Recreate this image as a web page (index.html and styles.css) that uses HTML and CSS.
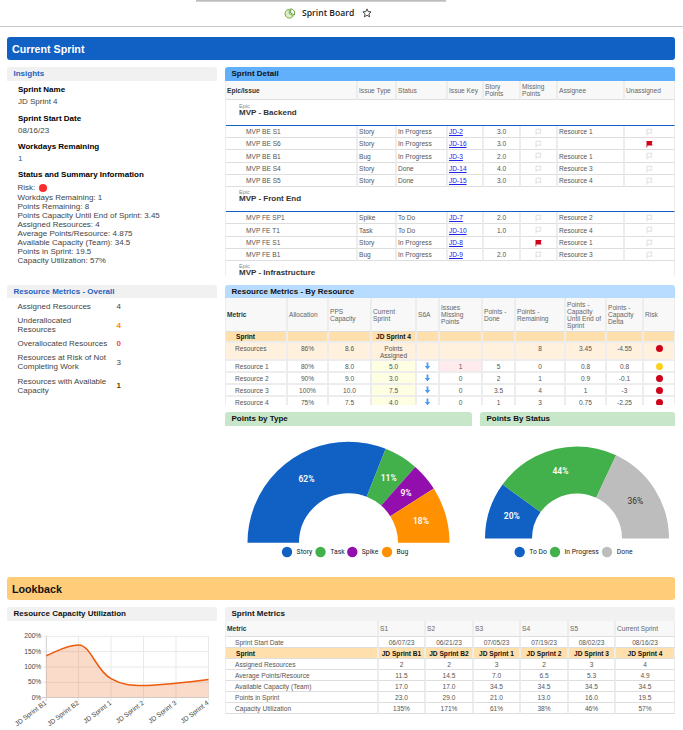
FILE: index.html
```html
<!DOCTYPE html>
<html lang="en">

<head>
    <meta charset="UTF-8">
    <meta name="viewport" content="width=device-width, initial-scale=1.0">
    <title>Sprint Board</title>
    <link rel="stylesheet" href="styles.css">
</head>

<body>
    <svg class="defs" width="0" height="0">
        <symbol id="flag" viewBox="0 0 7 8">
            <path d="M1 7.5V1.2h5L5 3.2l1 2H1" fill="none" stroke="#dcdcdc" stroke-width="0.9" />
        </symbol>
        <symbol id="flag-red" viewBox="0 0 7 8">
            <path d="M0.5 7.5V1h6L5.8 3.2l.7 2.3H1.3v2z" fill="#d0021b" />
        </symbol>
        <symbol id="down" viewBox="0 0 7 8">
            <path d="M2.6 0.5h1.8v3.4h1.8L3.5 7.5 0.8 3.9h1.8z" fill="#4a9cf0" />
        </symbol>
    </svg>

    <header class="topbar">
        <div class="tab-shadow"></div>
        <div class="title">
            <svg width="12" height="11" viewBox="0 0 12 11">
                <path d="M5.3 1.3A4.4 4.4 0 1 0 9.3 7.8L5.3 5.5z" fill="#dcedc8" stroke="#689f38" stroke-width="0.9" />
                <path d="M6.7 0.8v4.2l3.6 2A4.3 4.3 0 0 0 6.7 0.8z" fill="#fff" stroke="#558b2f" stroke-width="0.9" />
            </svg>
            <span>Sprint Board</span>
            <svg width="10" height="10" viewBox="0 0 10 10">
                <path d="M5 .9l1.2 2.7 2.9.3-2.2 2 .7 2.9L5 7.3 2.4 8.8l.7-2.9-2.2-2 2.9-.3z" fill="none" stroke="#333" stroke-width="0.9" />
            </svg>
        </div>
    </header>

    <main>
        <h1 class="bar blue">Current Sprint</h1>

        <div class="row detail-row">
            <section class="panel side">
                <h2 class="gray link">Insights</h2>
                <dl class="insights">
                    <dt>Sprint Name</dt>
                    <dd>JD Sprint 4</dd>
                    <dt>Sprint Start Date</dt>
                    <dd>08/16/23</dd>
                    <dt>Workdays Remaining</dt>
                    <dd class="count">1</dd>
                    <dt>Status and Summary Information</dt>
                </dl>
                <ul class="summary">
                    <li>Risk: <i class="dot bright"></i></li>
                    <li>Workdays Remaining: 1</li>
                    <li>Points Remaining: 8</li>
                    <li>Points Capacity Until End of Sprint: 3.45</li>
                    <li>Assigned Resources: 4</li>
                    <li>Average Points/Resource: 4.875</li>
                    <li>Available Capacity (Team): 34.5</li>
                    <li>Points in Sprint: 19.5</li>
                    <li>Capacity Utilization: 57%</li>
                </ul>
            </section>

            <section class="panel wide">
                <h2 class="sky">Sprint Detail</h2>
                <table class="detail">
                    <colgroup><col class="w132"><col class="w39"><col class="w51"><col class="w36"><col class="w37"><col class="w37"><col class="w67"><col class="w50"></colgroup>
                    <thead>
                        <tr><th>Epic/Issue</th><th>Issue Type</th><th>Status</th><th>Issue Key</th><th>Story<br>Points</th><th>Missing<br>Points</th><th>Assignee</th><th>Unassigned</th></tr>
                    </thead>
                    <tbody>
                        <tr class="epic"><td colspan="8"><small>Epic</small><b>MVP - Backend</b></td></tr>
                        <tr><td>MVP BE S1</td><td>Story</td><td>In Progress</td><td><a href="#">JD-2</a></td><td>3.0</td><td><svg><use href="#flag" /></svg></td><td>Resource 1</td><td><svg><use href="#flag" /></svg></td></tr>
                        <tr><td>MVP BE S6</td><td>Story</td><td>In Progress</td><td><a href="#">JD-16</a></td><td>3.0</td><td><svg><use href="#flag" /></svg></td><td></td><td><svg><use href="#flag-red" /></svg></td></tr>
                        <tr class="tall"><td>MVP BE B1</td><td>Bug</td><td>In Progress</td><td><a href="#">JD-3</a></td><td>2.0</td><td><svg><use href="#flag" /></svg></td><td>Resource 1</td><td><svg><use href="#flag" /></svg></td></tr>
                        <tr><td>MVP BE S4</td><td>Story</td><td>Done</td><td><a href="#">JD-14</a></td><td>4.0</td><td><svg><use href="#flag" /></svg></td><td>Resource 3</td><td><svg><use href="#flag" /></svg></td></tr>
                        <tr><td>MVP BE S5</td><td>Story</td><td>Done</td><td><a href="#">JD-15</a></td><td>3.0</td><td><svg><use href="#flag" /></svg></td><td>Resource 4</td><td><svg><use href="#flag" /></svg></td></tr>
                        <tr class="epic second"><td colspan="8"><small>Epic</small><b>MVP - Front End</b></td></tr>
                        <tr><td>MVP FE SP1</td><td>Spike</td><td>To Do</td><td><a href="#">JD-7</a></td><td>2.0</td><td><svg><use href="#flag" /></svg></td><td>Resource 2</td><td><svg><use href="#flag" /></svg></td></tr>
                        <tr class="tall"><td>MVP FE T1</td><td>Task</td><td>To Do</td><td><a href="#">JD-10</a></td><td>1.0</td><td><svg><use href="#flag" /></svg></td><td>Resource 4</td><td><svg><use href="#flag" /></svg></td></tr>
                        <tr><td>MVP FE S1</td><td>Story</td><td>In Progress</td><td><a href="#">JD-8</a></td><td></td><td><svg><use href="#flag-red" /></svg></td><td>Resource 1</td><td><svg><use href="#flag" /></svg></td></tr>
                        <tr><td>MVP FE B1</td><td>Bug</td><td>In Progress</td><td><a href="#">JD-9</a></td><td>2.0</td><td><svg><use href="#flag" /></svg></td><td>Resource 3</td><td><svg><use href="#flag" /></svg></td></tr>
                        <tr class="epic last"><td colspan="8"><small>Epic</small><b>MVP - Infrastructure</b></td></tr>
                    </tbody>
                </table>
            </section>
        </div>

        <div class="row metrics-row">
            <section class="panel side">
                <h2 class="gray link">Resource Metrics - Overall</h2>
                <dl class="overall">
                    <dt>Assigned Resources</dt>
                    <dd>4</dd>
                    <dt>Underallocated Resources</dt>
                    <dd class="orange">4</dd>
                    <dt>Overallocated Resources</dt>
                    <dd class="red">0</dd>
                    <dt>Resources at Risk of Not Completing Work</dt>
                    <dd>3</dd>
                    <dt>Resources with Available Capacity</dt>
                    <dd class="olive">1</dd>
                </dl>
            </section>

            <div class="stack">
                <section class="panel by-resource">
                    <h2 class="pale">Resource Metrics - By Resource</h2>
                    <table class="resources">
                        <colgroup><col class="w62"><col class="w41"><col class="w43"><col class="w45"><col class="w23"><col class="w43"><col class="w33"><col class="w50"><col class="w41"><col class="w37"><col class="w31"></colgroup>
                        <thead>
                            <tr><th>Metric</th><th>Allocation</th><th>PPS<br>Capacity</th><th>Current<br>Sprint</th><th>S6A</th><th>Issues<br>Missing<br>Points</th><th>Points -<br>Done</th><th>Points -<br>Remaining</th><th>Points -<br>Capacity<br>Until End of<br>Sprint</th><th>Points -<br>Capacity<br>Delta</th><th>Risk</th></tr>
                        </thead>
                        <tbody>
                            <tr class="sprint"><td>Sprint</td><td></td><td></td><td>JD Sprint 4</td><td></td><td></td><td></td><td></td><td></td><td></td><td></td></tr>
                            <tr class="total"><td>Resources</td><td>86%</td><td>8.6</td><td>Points<br>Assigned</td><td></td><td></td><td></td><td>8</td><td>3.45</td><td>-4.55</td><td><i class="dot"></i></td></tr>
                            <tr><td>Resource 1</td><td>80%</td><td>8.0</td><td class="lemon">5.0</td><td><svg><use href="#down" /></svg></td><td class="pink">1</td><td>5</td><td>0</td><td>0.8</td><td>0.8</td><td><i class="dot yellow"></i></td></tr>
                            <tr><td>Resource 2</td><td>90%</td><td>9.0</td><td class="lemon">3.0</td><td><svg><use href="#down" /></svg></td><td>0</td><td>2</td><td>1</td><td>0.9</td><td>-0.1</td><td><i class="dot"></i></td></tr>
                            <tr><td>Resource 3</td><td>100%</td><td>10.0</td><td class="lemon">7.5</td><td><svg><use href="#down" /></svg></td><td>0</td><td>3.5</td><td>4</td><td>1</td><td>-3</td><td><i class="dot"></i></td></tr>
                            <tr><td>Resource 4</td><td>75%</td><td>7.5</td><td class="lemon">4.0</td><td><svg><use href="#down" /></svg></td><td>0</td><td>1</td><td>3</td><td>0.75</td><td>-2.25</td><td><i class="dot"></i></td></tr>
                        </tbody>
                    </table>
                </section>

                <div class="charts">
                    <section class="panel by-type">
                        <h2 class="green">Points by Type</h2>
                        <svg class="donut" width="247" height="136" viewBox="225 426 247 136">
                            <g fill="none" stroke-width="51.5">
                                <path pathLength="100" d="M273.25 542.7a75.25 75.25 0 0 1 150.5 0" stroke="#1161c5" stroke-dasharray="62 200" />
                                <path pathLength="100" d="M273.25 542.7a75.25 75.25 0 0 1 150.5 0" stroke="#43b14b" stroke-dasharray="11 200" stroke-dashoffset="-62" />
                                <path pathLength="100" d="M273.25 542.7a75.25 75.25 0 0 1 150.5 0" stroke="#920fae" stroke-dasharray="9 200" stroke-dashoffset="-73" />
                                <path pathLength="100" d="M273.25 542.7a75.25 75.25 0 0 1 150.5 0" stroke="#ff9100" stroke-dasharray="18 200" stroke-dashoffset="-82" />
                            </g>
                            <g class="slice">
                                <text x="306.5" y="481.6">62%</text>
                                <text x="388.7" y="480.6">11%</text>
                                <text x="406" y="496.3">9%</text>
                                <text x="421" y="524.2">18%</text>
                            </g>
                            <circle cx="287" cy="552" r="5.2" fill="#1161c5" />
                            <circle cx="320.5" cy="552" r="5.2" fill="#43b14b" />
                            <circle cx="352.3" cy="552" r="5.2" fill="#920fae" />
                            <circle cx="387" cy="552" r="5.2" fill="#ff9100" />
                            <g class="legend">
                                <text x="296.6" y="554.2">Story</text>
                                <text x="330.3" y="554.2">Task</text>
                                <text x="361.8" y="554.2">Spike</text>
                                <text x="396.5" y="554.2">Bug</text>
                            </g>
                        </svg>
                    </section>
                    <section class="panel by-status">
                        <h2 class="green">Points By Status</h2>
                        <svg class="donut" width="195" height="136" viewBox="480 426 195 136">
                            <g fill="none" stroke-width="47">
                                <path pathLength="100" d="M508.5 538.5a68.5 68.5 0 0 1 137 0" stroke="#1161c5" stroke-dasharray="20 200" />
                                <path pathLength="100" d="M508.5 538.5a68.5 68.5 0 0 1 137 0" stroke="#43b14b" stroke-dasharray="44 200" stroke-dashoffset="-20" />
                                <path pathLength="100" d="M508.5 538.5a68.5 68.5 0 0 1 137 0" stroke="#bdbdbd" stroke-dasharray="36 200" stroke-dashoffset="-64" />
                            </g>
                            <g class="slice">
                                <text x="511.8" y="519">20%</text>
                                <text x="560.5" y="473.7">44%</text>
                                <text x="635.3" y="504" class="dark">36%</text>
                            </g>
                            <circle cx="519.7" cy="552" r="5.2" fill="#1161c5" />
                            <circle cx="555" cy="552" r="5.2" fill="#43b14b" />
                            <circle cx="607" cy="552" r="5.2" fill="#bdbdbd" />
                            <g class="legend">
                                <text x="529.2" y="554.2">To Do</text>
                                <text x="564.5" y="554.2">In Progress</text>
                                <text x="616.8" y="554.2">Done</text>
                            </g>
                        </svg>
                    </section>
                </div>
            </div>
        </div>

        <h1 class="bar amber">Lookback</h1>

        <div class="row">
            <section class="panel side">
                <h2 class="gray">Resource Capacity Utilization</h2>
                <svg class="trend" width="210" height="109" viewBox="7 621 210 109">
                    <g stroke="#e9e9e9" stroke-width="1">
                        <path d="M42 636.3H208.5M42 651.6H208.5M42 667H208.5M42 682.3H208.5" />
                        <path d="M78.5 636V701M111 636V701M143.5 636V701M176 636V701M208.5 636V701" />
                    </g>
                    <path d="M46.3 636V701M42 697.5H208.5" stroke="#cfcfcf" />
                    <path d="M46.3 655.8C57 651.5 66 644.9 78.5 644.9C91 644.9 96 671 111 678.6C122 685 132 685.4 143.5 685.6C154 685.6 165 684 176 683.2C187 682.2 198 681 208.5 679.6V697.3H46.3z" fill="#e8590c" fill-opacity="0.22" />
                    <path d="M46.3 655.8C57 651.5 66 644.9 78.5 644.9C91 644.9 96 671 111 678.6C122 685 132 685.4 143.5 685.6C154 685.6 165 684 176 683.2C187 682.2 198 681 208.5 679.6" fill="none" stroke="#ea5b0c" stroke-width="1.5" />
                    <g class="axis">
                        <text x="41.3" y="638.3">200%</text>
                        <text x="41.3" y="653.6">150%</text>
                        <text x="41.3" y="669">100%</text>
                        <text x="41.3" y="684.3">50%</text>
                        <text x="41.3" y="699.8">0%</text>
                        <text transform="translate(47 703.8) rotate(-37)">JD Sprint B1</text>
                        <text transform="translate(79.5 703.8) rotate(-37)">JD Sprint B2</text>
                        <text transform="translate(112 703.8) rotate(-37)">JD Sprint 1</text>
                        <text transform="translate(144.5 703.8) rotate(-37)">JD Sprint 2</text>
                        <text transform="translate(177 703.8) rotate(-37)">JD Sprint 3</text>
                        <text transform="translate(209.3 703.8) rotate(-37)">JD Sprint 4</text>
                    </g>
                </svg>
            </section>

            <section class="panel wide">
                <h2 class="gray">Sprint Metrics</h2>
                <table class="history">
                    <colgroup><col class="w153"><col class="w47"><col class="w48"><col class="w47"><col class="w48"><col class="w47"><col class="w59"></colgroup>
                    <thead>
                        <tr><th>Metric</th><th>S1</th><th>S2</th><th>S3</th><th>S4</th><th>S5</th><th>Current Sprint</th></tr>
                    </thead>
                    <tbody>
                        <tr><td>Sprint Start Date</td><td>06/07/23</td><td>06/21/23</td><td>07/05/23</td><td>07/19/23</td><td>08/02/23</td><td>08/16/23</td></tr>
                        <tr class="sprint"><td>Sprint</td><td>JD Sprint B1</td><td>JD Sprint B2</td><td>JD Sprint 1</td><td>JD Sprint 2</td><td>JD Sprint 3</td><td>JD Sprint 4</td></tr>
                        <tr><td>Assigned Resources</td><td>2</td><td>2</td><td>3</td><td>2</td><td>3</td><td>4</td></tr>
                        <tr><td>Average Points/Resource</td><td>11.5</td><td>14.5</td><td>7.0</td><td>6.5</td><td>5.3</td><td>4.9</td></tr>
                        <tr><td>Available Capacity (Team)</td><td>17.0</td><td>17.0</td><td>34.5</td><td>34.5</td><td>34.5</td><td>34.5</td></tr>
                        <tr><td>Points in Sprint</td><td>23.0</td><td>29.0</td><td>21.0</td><td>13.0</td><td>16.0</td><td>19.5</td></tr>
                        <tr><td>Capacity Utilization</td><td>135%</td><td>171%</td><td>61%</td><td>38%</td><td>46%</td><td>57%</td></tr>
                    </tbody>
                </table>
            </section>
        </div>
    </main>
</body>

</html>
```
FILE: styles.css
```css
* {
    box-sizing: border-box;
}

body {
    margin: 0;
    height: 730px;
    overflow: hidden;
    background: #fff;
    color: #444;
    font-family: "Liberation Sans", Arial, sans-serif;
    font-size: 8px;
}

h1, h2, dl, dd, ul {
    margin: 0;
    padding: 0;
}

svg {
    display: block;
}

.defs {
    display: none;
}

/* top bar */
.topbar {
    height: 27px;
    border-bottom: 1px solid #c8c8c8;
}

.tab-shadow {
    width: 250px;
    height: 2px;
    margin-left: 196px;
    background: linear-gradient(#b5b5b5, #d8d8d8);
}

.title {
    display: flex;
    align-items: center;
    height: 22px;
    padding-left: 284px;
    color: #222;
    font: 600 8.6px "Open Sans", sans-serif;
}

.title span {
    width: 53px;
    margin: 0 7px 0 6px;
    white-space: nowrap;
}

/* layout */
main {
    padding: 10px 8px 0 7px;
}

.bar {
    height: 23px;
    padding-left: 5px;
    border-radius: 3px;
    margin-bottom: 7px;
    font-size: 10.7px;
    line-height: 24px;
}

.blue {
    background: #1161c5;
    color: #fff;
}

.amber {
    background: #ffcc7a;
    color: #111;
}

.row {
    display: flex;
    gap: 8px;
}

.panel {
    overflow: hidden;
}

.side {
    width: 210px;
}

.wide,
.stack {
    width: 450px;
}

.detail-row {
    height: 209px;
    margin-bottom: 9px;
}

.metrics-row {
    height: 292px;
}

.by-resource {
    height: 120px;
    margin-bottom: 7px;
}

.charts {
    display: flex;
    gap: 8px;
}

.by-type {
    width: 247px;
}

.by-status {
    width: 195px;
}

h2 {
    height: 14px;
    padding-left: 6.5px;
    border-radius: 3px 3px 0 0;
    color: #111;
    font-size: 8px;
    line-height: 13px;
}

.gray { background: #f1f1f1; }
.sky { background: #60b0fc; }
.pale { background: #b8dcff; }
.green { background: #c8e6c9; }
.link { color: #1d5fc0; }

.metrics-row .side h2,
.by-resource h2 {
    height: 13px;
}

/* insights */
.insights {
    padding: 2px 0 0 11px;
}

.insights dt {
    height: 13px;
    color: #000;
    font-weight: bold;
    line-height: 13px;
}

.insights dd {
    height: 15.7px;
    padding-left: 0;
    line-height: 12px;
}

.insights .count {
    height: 14.6px;
    color: #2c5f9e;
}

.summary {
    padding: 2.5px 0 0 10.5px;
    list-style: none;
    line-height: 9.05px;
}

.dot {
    display: inline-block;
    width: 7px;
    height: 7px;
    border-radius: 50%;
    background: #d0021b;
    vertical-align: middle;
}

.summary .dot {
    width: 8px;
    height: 8px;
    margin-left: 1px;
    vertical-align: -1.5px;
}

.dot.bright { background: #fb2c2c; }
.dot.yellow { background: #fbd01f; }

.overall {
    display: grid;
    grid-template-columns: 92px 20px;
    column-gap: 7px;
    row-gap: 5px;
    align-items: center;
    padding: 4px 0 0 10.5px;
    line-height: 9.1px;
}

.orange, .red, .olive { font-weight: bold; }
.orange { color: #ff8a00; }
.red { color: #f04a3a; }
.olive { color: #5c4a00; }

/* tables */
table {
    width: 450px;
    table-layout: fixed;
    border-collapse: separate;
    border-spacing: 0;
    border-left: 1px solid #ededed;
    color: #555;
    font-size: 6.6px;
    line-height: 7px;
}

.w23 { width: 23px; }
.w31 { width: 31px; }
.w33 { width: 33px; }
.w36 { width: 36px; }
.w37 { width: 37px; }
.w39 { width: 39px; }
.w41 { width: 41px; }
.w43 { width: 43px; }
.w45 { width: 45px; }
.w47 { width: 47px; }
.w48 { width: 48px; }
.w50 { width: 50px; }
.w51 { width: 51px; }
.w59 { width: 59px; }
.w62 { width: 62px; }
.w67 { width: 67px; }
.w132 { width: 132px; }
.w153 { width: 153px; }

th, td {
    padding: 0 1px;
    border-right: 2px solid #ededed;
    border-bottom: 1px solid #dedede;
    text-align: center;
    white-space: nowrap;
}

th {
    background: #f8f8f8;
    color: #666;
    font-weight: normal;
    text-align: left;
}

th:first-child {
    color: #333;
    font-weight: bold;
}

th:last-child, td:last-child {
    border-right-width: 1px;
}

td svg {
    width: 7px;
    height: 8px;
    margin: 0 auto;
}

.detail thead tr { height: 19px; }
.detail tr { height: 12px; }
.detail tr.tall { height: 13px; }
.detail td { text-align: left; }
.detail td:first-child { padding-left: 20px; }
.detail td:nth-child(5) { text-align: center; }

.detail .epic { height: 26px; }
.detail .epic.second { height: 25px; }

.detail .epic td {
    padding: 2px 0 0 13px;
    border-bottom-color: #1161c5;
    color: #333;
    vertical-align: top;
}

.detail .epic:first-child td { padding-top: 3px; }

.detail .epic.last { height: 16px; }
.detail .epic.last td { border-bottom: 0; }

.epic small {
    display: block;
    color: #888;
    font-size: 5.6px;
    line-height: 6px;
}

.epic b {
    display: block;
    font-size: 8px;
    line-height: 8px;
}

a { color: #2222ee; }

.resources thead tr { height: 34px; }
.resources tr { height: 12px; }
.resources td { border-bottom: 2px solid #ededed; }

.resources td:first-child,
.history td:first-child {
    padding-left: 9px;
    text-align: left;
}

.sprint td:first-child { padding-left: 10px; }

.resources .sprint { height: 11px; }
.resources .total { height: 18px; }
.total td { background: #fff1de; vertical-align: top; padding-top: 2px; }
.sprint td { background: #ffdfac; color: #111; font-weight: bold; }
.lemon { background: #fdfee2; }
.pink { background: #ffebee; }
.resources .dot { display: block; margin: 0 auto; }

.history thead tr { height: 16px; }
.history tr { height: 11px; }

/* charts */
.slice text {
    fill: #fff;
    font: 600 8.5px Roboto, sans-serif;
    text-anchor: middle;
}

.slice .dark {
    fill: #333;
    font-weight: 400;
}

.legend text {
    fill: #222;
    font: 6.8px Roboto, sans-serif;
}

.axis text {
    fill: #444;
    font-size: 6.7px;
    text-anchor: end;
}
```
